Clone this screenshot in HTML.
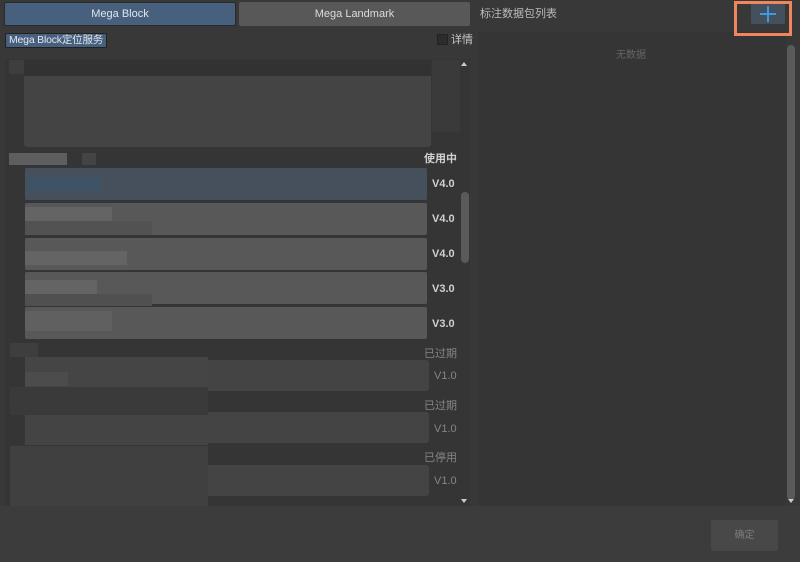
<!DOCTYPE html>
<html><head><meta charset="utf-8"><style>
*{margin:0;padding:0;box-sizing:border-box}
body{width:800px;height:562px;background:#383838;position:relative;overflow:hidden;font-family:"Liberation Sans","Noto Sans CJK SC",sans-serif;}
.a{position:absolute;white-space:nowrap}
.t{font-size:11px;color:#c8c8c8;line-height:13px}
.row{position:absolute;left:25px;width:402px;height:32px;background:#585858;border-radius:2px}
.ver{position:absolute;left:432px;font-size:11px;color:#d0d0d0;font-weight:bold;line-height:13px}
.dim{position:absolute;font-size:11px;color:#858585;line-height:13px}
.drow{position:absolute;left:25px;width:404px;height:31px;background:#444;border-radius:3px}
.blk{position:absolute;background:#4a4a4a}
</style></head><body>
<div class="a" style="left:4px;top:2px;width:232px;height:24px;background:#46607e;border:1px solid #2a2a2a;border-radius:2px;color:#dfe6ee;font-size:11px;text-align:center;line-height:22px">Mega Block</div>
<div class="a" style="left:239px;top:2px;width:231px;height:24px;background:#585858;border-radius:2px;color:#dcdcdc;font-size:11px;text-align:center;line-height:24px">Mega Landmark</div>
<div class="a" style="left:5px;top:33px;width:102px;height:15px;background:#46607e;border:1px solid #222;border-radius:2px;color:#e0e6ee;font-size:10.5px;line-height:13px;padding-left:3px;letter-spacing:-0.2px;overflow:hidden">Mega Block定位服务</div>
<div class="a" style="left:437px;top:34px;width:11px;height:11px;background:#2c2c2c;border:1px solid #222"></div>
<div class="a t" style="left:451px;top:34px">详情</div>
<!-- left list -->
<div class="a" style="left:5px;top:59px;width:465px;height:447px;background:#353535"></div>
<div class="a" style="left:24px;top:76px;width:407px;height:71px;background:#444;border-radius:0 0 3px 3px"></div>
<div class="a" style="left:24px;top:60px;width:407px;height:16px;background:#323232"></div>
<div class="blk" style="left:9px;top:60px;width:15px;height:14px;background:#3e3e3e"></div>
<div class="blk" style="left:432px;top:60px;width:28px;height:72px;background:#3a3a3a"></div>
<div class="blk" style="left:9px;top:153px;width:58px;height:12px;background:#5e5e5e"></div>
<div class="blk" style="left:82px;top:153px;width:14px;height:12px;background:#444"></div>
<div class="a t" style="left:424px;top:153px;font-weight:bold;color:#d0d0d0">使用中</div>
<div class="row" style="top:168px;background:#46505c"></div>
<div class="a" style="left:28px;top:177px;width:73px;height:14px;background:#3e5466"></div>
<div class="ver" style="top:178px">V4.0</div>
<div class="row" style="top:203px"></div><div class="ver" style="top:213px">V4.0</div>
<div class="row" style="top:238px"></div><div class="ver" style="top:248px">V4.0</div>
<div class="row" style="top:272px"></div><div class="ver" style="top:283px">V3.0</div>
<div class="row" style="top:307px"></div><div class="ver" style="top:318px">V3.0</div>
<div class="blk" style="left:25px;top:207px;width:87px;height:14px;background:#646464"></div>
<div class="blk" style="left:25px;top:221px;width:127px;height:14px;background:#525252"></div>
<div class="blk" style="left:25px;top:251px;width:102px;height:14px;background:#646464"></div>
<div class="blk" style="left:25px;top:280px;width:72px;height:14px;background:#646464"></div>
<div class="blk" style="left:25px;top:294px;width:127px;height:12px;background:#505050"></div>
<div class="blk" style="left:25px;top:311px;width:87px;height:20px;background:#606060"></div>
<div class="dim" style="left:424px;top:348px">已过期</div>
<div class="drow" style="top:360px"></div><div class="dim" style="left:434px;top:370px">V1.0</div>
<div class="dim" style="left:424px;top:400px">已过期</div>
<div class="drow" style="top:412px"></div><div class="dim" style="left:434px;top:423px">V1.0</div>
<div class="dim" style="left:424px;top:452px">已停用</div>
<div class="drow" style="top:465px"></div><div class="dim" style="left:434px;top:475px">V1.0</div>
<div class="blk" style="left:10px;top:343px;width:28px;height:14px;background:#3e3e3e"></div>
<div class="blk" style="left:25px;top:357px;width:183px;height:30px;background:#454545"></div>
<div class="blk" style="left:25px;top:372px;width:43px;height:14px;background:#4c4c4c"></div>
<div class="blk" style="left:10px;top:387px;width:198px;height:28px;background:#3a3a3a"></div>
<div class="blk" style="left:25px;top:415px;width:183px;height:30px;background:#444"></div>
<div class="blk" style="left:10px;top:446px;width:198px;height:60px;background:#404040"></div>
<!-- left scrollbar -->
<div class="a" style="left:461px;top:62px;width:0;height:0;border-left:3px solid transparent;border-right:3px solid transparent;border-bottom:4px solid #ccc"></div>
<div class="a" style="left:461px;top:192px;width:8px;height:71px;background:#5a5a5a;border-radius:4px"></div>
<div class="a" style="left:461px;top:499px;width:0;height:0;border-left:3px solid transparent;border-right:3px solid transparent;border-top:4px solid #ccc"></div>
<!-- right panel -->
<div class="a t" style="left:480px;top:8px;color:#bbb">标注数据包列表</div>
<div class="a" style="left:478px;top:32px;width:308px;height:474px;background:#353535"></div>
<div class="a" style="left:616px;top:46px;font-size:10px;color:#666">无数据</div>
<div class="a" style="left:787px;top:45px;width:8px;height:455px;background:#5a5a5a;border-radius:4px"></div>
<div class="a" style="left:788px;top:499px;width:0;height:0;border-left:3px solid transparent;border-right:3px solid transparent;border-top:4px solid #ccc"></div>
<div class="a" style="left:751px;top:3px;width:34px;height:21px;background:#46505c;border-radius:2px"></div>
<div class="a" style="left:760px;top:13px;width:16px;height:2px;background:#3a9ae6"></div>
<div class="a" style="left:767px;top:6px;width:2px;height:16px;background:#3a9ae6"></div>
<div class="a" style="left:734px;top:1px;width:58px;height:35px;border:3px solid #f0865e"></div>
<!-- bottom -->
<div class="a" style="left:0;top:506px;width:800px;height:56px;background:#3c3c3c"></div>
<div class="a" style="left:711px;top:520px;width:67px;height:31px;background:#484848;border-radius:2px;color:#7c7c7c;font-size:10px;text-align:center;line-height:31px">确定</div>
</body></html>
